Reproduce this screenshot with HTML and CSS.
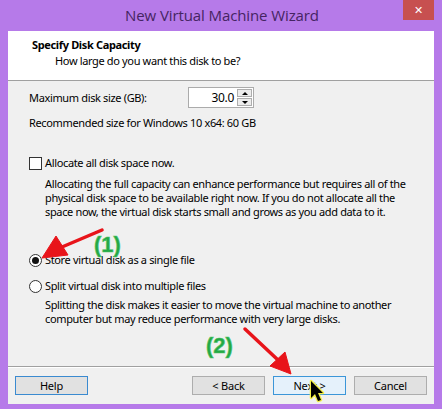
FILE: index.html
```html
<!DOCTYPE html>
<html>
<head>
<meta charset="utf-8">
<link rel="stylesheet" href="styles.css">
</head>
<body>
<div class="window">
  <div class="titlebar">
    <div class="title">New Virtual Machine Wizard</div>
    <div class="close">&#x2715;</div>
  </div>
  <div class="client">
    <div class="header">
      <div class="h-title">Specify Disk Capacity</div>
      <div class="h-sub">How large do you want this disk to be?</div>
    </div>
    <div class="body">
      <div class="size-row">
        <span class="size-label">Maximum disk size (GB):</span>
        <div class="spin">
          <div class="spin-field">30.0</div>
          <div class="spin-btns">
            <div class="spin-btn"><span class="tri up"></span></div>
            <div class="spin-btn"><span class="tri down"></span></div>
          </div>
        </div>
      </div>
      <div class="rec">Recommended size for Windows 10 x64: 60 GB</div>
      <div class="opt check-row">
        <span class="checkbox"></span>
        <span>Allocate all disk space now.</span>
      </div>
      <div class="desc d1">Allocating the full capacity can enhance performance but requires all of the<br>physical disk space to be available right now. If you do not allocate all the<br>space now, the virtual disk starts small and grows as you add data to it.</div>
      <div class="opt radio-row r1">
        <span class="radio checked"><span class="dot"></span></span>
        <span>Store virtual disk as a single file</span>
      </div>
      <div class="opt radio-row r2">
        <span class="radio"></span>
        <span>Split virtual disk into multiple files</span>
      </div>
      <div class="desc d2">Splitting the disk makes it easier to move the virtual machine to another<br>computer but may reduce performance with very large disks.</div>
    </div>
    <div class="footer">
      <button class="btn focus">Help</button>
      <div class="spacer"></div>
      <button class="btn">&lt; Back</button>
      <button class="btn hover">Next &gt;</button>
      <button class="btn">Cancel</button>
    </div>
  </div>
  <div class="ann ann1">(1)</div>
  <div class="ann ann2">(2)</div>
  <svg class="overlay" width="442" height="409" viewBox="0 0 442 409">
    <g fill="#e8141a" stroke="#e8141a">
      <line x1="102" y1="230" x2="62" y2="247" stroke-width="3.5" stroke-linecap="round"/>
      <polygon points="42,258 56,236 68,255" stroke-width="1" stroke-linejoin="round"/>
      <line x1="245" y1="329" x2="278" y2="360" stroke-width="3.5" stroke-linecap="round"/>
      <polygon points="291,374 270,366 285,352" stroke-width="1" stroke-linejoin="round"/>
    </g>
    <g transform="translate(311,381)">
      <path d="M0,0 L0,17 L4,13 L7,20 L10,19 L7,12 L12,12 Z" fill="#000" stroke="#f3ef4a" stroke-width="2.5" stroke-linejoin="round" paint-order="stroke"/>
    </g>
  </svg>
</div>
</body>
</html>
```
FILE: styles.css
```css
html, body {
  margin: 0;
  padding: 0;
}
body {
  width: 442px;
  height: 409px;
  overflow: hidden;
  font-family: "Noto Sans", "Open Sans", sans-serif;
  font-size: 11px;
  letter-spacing: -0.35px;
  color: #000;
}
.window {
  position: relative;
  width: 442px;
  height: 409px;
  background: #b67ae9;
  display: flex;
  flex-direction: column;
  box-sizing: border-box;
  padding: 0 8px 5px 8px;
}
.titlebar {
  height: 31px;
  flex: 0 0 31px;
  position: relative;
  display: flex;
  align-items: center;
  justify-content: center;
}
.title {
  font-family: "Open Sans", "Noto Sans", sans-serif;
  font-size: 15px;
  letter-spacing: -0.1px;
  color: #452462;
  margin-top: -2px;
  margin-left: 2px;
}
.close {
  position: absolute;
  top: 0;
  right: 0;
  width: 31px;
  height: 20px;
  background: #c75050;
  color: #fff;
  font-size: 11px;
  font-weight: bold;
  letter-spacing: 0;
  display: flex;
  align-items: center;
  justify-content: center;
  font-family: "DejaVu Sans", sans-serif;
}
.client {
  flex: 1;
  display: flex;
  flex-direction: column;
  background: #f0f0f0;
}
.header {
  height: 50px;
  flex: 0 0 50px;
  background: #fff;
  border-bottom: 1px solid #a0a0a0;
  box-sizing: border-box;
  padding: 6px 0 0 24px;
}
.h-title {
  font-weight: bold;
  font-size: 11px;
  line-height: 16px;
}
.h-sub {
  padding-left: 23px;
  line-height: 16px;
}
.body {
  flex: 1;
  padding: 7px 0 0 21px;
  box-sizing: border-box;
  white-space: nowrap;
}
.size-row {
  display: flex;
  align-items: center;
  height: 21px;
  margin-top: -1px;
}
.size-label {
  width: 159px;
}
.spin {
  display: flex;
  width: 66px;
  height: 21px;
  box-sizing: border-box;
  border: 1px solid #ababab;
  background: #fff;
}
.spin-field {
  flex: 1;
  text-align: right;
  padding-right: 3px;
  line-height: 19px;
  font-size: 12px;
}
.spin-btns {
  width: 16px;
  display: flex;
  flex-direction: column;
  gap: 1px;
  padding: 1px 1px 1px 0;
  box-sizing: border-box;
}
.spin-btn {
  flex: 1;
  border: 1px solid #adadad;
  background: #ececec;
  display: flex;
  align-items: center;
  justify-content: center;
}
.tri {
  width: 0;
  height: 0;
  border-left: 3px solid transparent;
  border-right: 3px solid transparent;
}
.tri.up { border-bottom: 3px solid #000; }
.tri.down { border-top: 3px solid #000; }
.rec {
  margin-top: 7px;
  line-height: 16px;
}
.opt {
  display: flex;
  align-items: center;
  gap: 3px;
  line-height: 16px;
}
.check-row { margin-top: 24px; }
.checkbox {
  width: 13px;
  height: 13px;
  box-sizing: border-box;
  border: 1px solid #333;
  background: #fff;
}
.desc {
  padding-left: 16px;
  line-height: 14px;
}
.d1 { margin-top: 6px; }
.r1 { margin-top: 33px; }
.r2 { margin-top: 10px; }
.d2 { margin-top: 4px; }
.radio {
  width: 13px;
  height: 13px;
  box-sizing: border-box;
  border: 1px solid #333;
  border-radius: 50%;
  background: #fff;
  display: flex;
  align-items: center;
  justify-content: center;
}
.dot {
  width: 7px;
  height: 7px;
  border-radius: 50%;
  background: #111;
}
.footer {
  flex: 0 0 38px;
  border-top: 1px solid #a0a0a0;
  box-shadow: inset 0 1px 0 #fff;
  display: flex;
  align-items: center;
  padding: 0 7px 0 7px;
  gap: 8px;
  box-sizing: border-box;
}
.spacer { flex: 1; }
.btn {
  width: 73px;
  height: 19px;
  box-sizing: border-box;
  border: 1px solid #adadad;
  background: #e1e1e1;
  font-family: "Noto Sans", "Open Sans", sans-serif;
  font-size: 11px;
  letter-spacing: -0.2px;
  padding: 0;
  color: #000;
}
.btn.focus { border-color: #3a8ad0; }
.btn.hover { border-color: #3c96d8; background: #e5f1fb; }
.ann {
  position: absolute;
  font-family: "Liberation Sans", sans-serif;
  font-weight: bold;
  font-size: 22px;
  letter-spacing: 0;
  color: #24a745;
  -webkit-text-stroke: 0.6px #4cc466;
  line-height: 22px;
}
.ann1 { left: 94px; top: 234px; }
.ann2 { left: 206px; top: 335px; }
.overlay {
  position: absolute;
  left: 0;
  top: 0;
}
```
